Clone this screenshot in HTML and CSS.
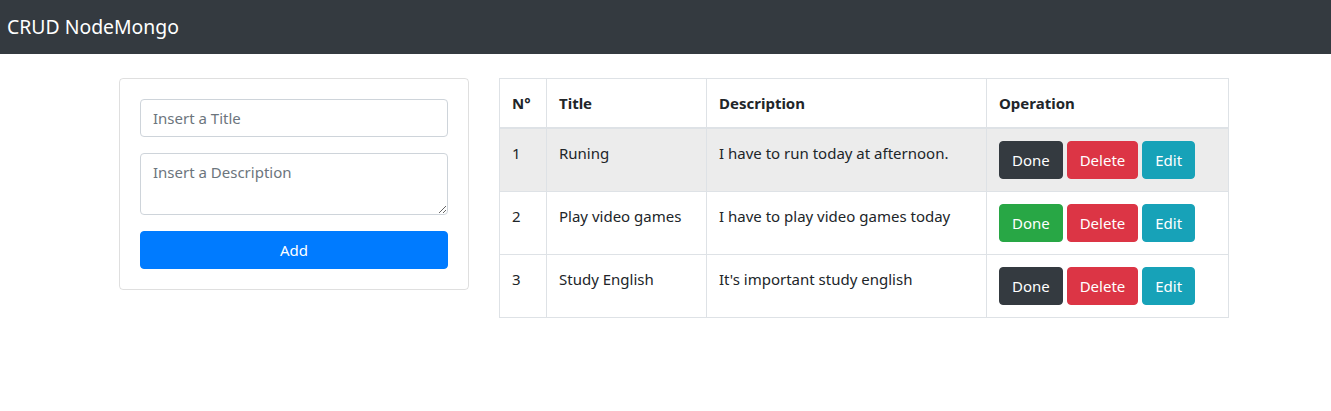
FILE: index.html
```html
<!DOCTYPE html>
<html lang="en">
<head>
<meta charset="utf-8">
<title>CRUD NodeMongo</title>
<link rel="stylesheet" href="styles.css">
</head>
<body>
<nav class="navbar">
  <a class="brand" href="#">CRUD NodeMongo</a>
</nav>
<main class="main">
  <section class="card">
    <form class="card-body">
      <div class="form-group">
        <input class="form-control" type="text" placeholder="Insert a Title">
      </div>
      <div class="form-group">
        <textarea class="form-control" rows="2" placeholder="Insert a Description"></textarea>
      </div>
      <button class="btn btn-primary btn-block" type="button">Add</button>
    </form>
  </section>
  <section class="table-wrap">
    <table class="table">
      <thead>
        <tr>
          <th class="c-num">N°</th>
          <th class="c-title">Title</th>
          <th class="c-desc">Description</th>
          <th class="c-op">Operation</th>
        </tr>
      </thead>
      <tbody>
        <tr class="striped">
          <td>1</td>
          <td>Runing</td>
          <td>I have to run today at afternoon.</td>
          <td><button class="btn btn-dark">Done</button> <button class="btn btn-danger">Delete</button> <button class="btn btn-info">Edit</button></td>
        </tr>
        <tr>
          <td>2</td>
          <td>Play video games</td>
          <td>I have to play video games today</td>
          <td><button class="btn btn-success">Done</button> <button class="btn btn-danger">Delete</button> <button class="btn btn-info">Edit</button></td>
        </tr>
        <tr>
          <td>3</td>
          <td>Study English</td>
          <td>It's important study english</td>
          <td><button class="btn btn-dark">Done</button> <button class="btn btn-danger">Delete</button> <button class="btn btn-info">Edit</button></td>
        </tr>
      </tbody>
    </table>
  </section>
</main>
</body>
</html>
```
FILE: styles.css
```css
* { box-sizing: border-box; }
html, body {
  margin: 0;
  padding: 0;
  background: #fff;
  color: #212529;
  font-family: "Noto Sans", "Open Sans", sans-serif;
  font-size: 16px;
  line-height: 1.5;
}
.navbar {
  height: 54px;
  background: #343a40;
  display: flex;
  align-items: center;
  padding: 0 7px;
}
.brand {
  color: #fff;
  font-size: 19.4px;
  text-decoration: none;
}
.main {
  display: flex;
  align-items: flex-start;
  gap: 30px;
  padding: 24px 0 0 119px;
}
.card {
  width: 350px;
  border: 1px solid rgba(0,0,0,.125);
  border-radius: 4px;
}
.card-body {
  padding: 20px;
  margin: 0;
}
.form-group { margin-bottom: 16px; }
.form-control {
  display: block;
  width: 100%;
  height: 38px;
  padding: 6px 12px;
  font-family: inherit;
  font-size: 15px;
  line-height: 24px;
  color: #495057;
  background: #fff;
  border: 1px solid #ced4da;
  border-radius: 4px;
  margin: 0;
}
textarea.form-control {
  height: 62px;
  resize: vertical;
}
.form-control::placeholder { color: #6c757d; opacity: 1; }
.btn {
  display: inline-block;
  font-family: inherit;
  font-size: 15px;
  line-height: 24px;
  padding: 6px 12px;
  border: 1px solid transparent;
  border-radius: 4px;
  color: #fff;
  cursor: pointer;
  vertical-align: middle;
}
.btn-block { display: block; width: 100%; }
.btn-primary { background: #007bff; border-color: #007bff; }
.btn-dark { background: #343a40; border-color: #343a40; }
.btn-success { background: #28a745; border-color: #28a745; }
.btn-danger { background: #dc3545; border-color: #dc3545; }
.btn-info { background: #17a2b8; border-color: #17a2b8; }
.table-wrap { width: 730px; }
.table {
  width: 100%;
  border-collapse: collapse;
  font-size: 15px;
}
.table th, .table td {
  border: 1px solid #dee2e6;
  padding: 12px;
  text-align: left;
  vertical-align: top;
  line-height: 24px;
}
.table th { font-weight: 700; }
.table thead th { border-bottom-width: 2px; }
.c-num { width: 47px; }
.c-title { width: 160px; }
.c-desc { width: 280px; }
.striped td { background: #ececec; }
```
